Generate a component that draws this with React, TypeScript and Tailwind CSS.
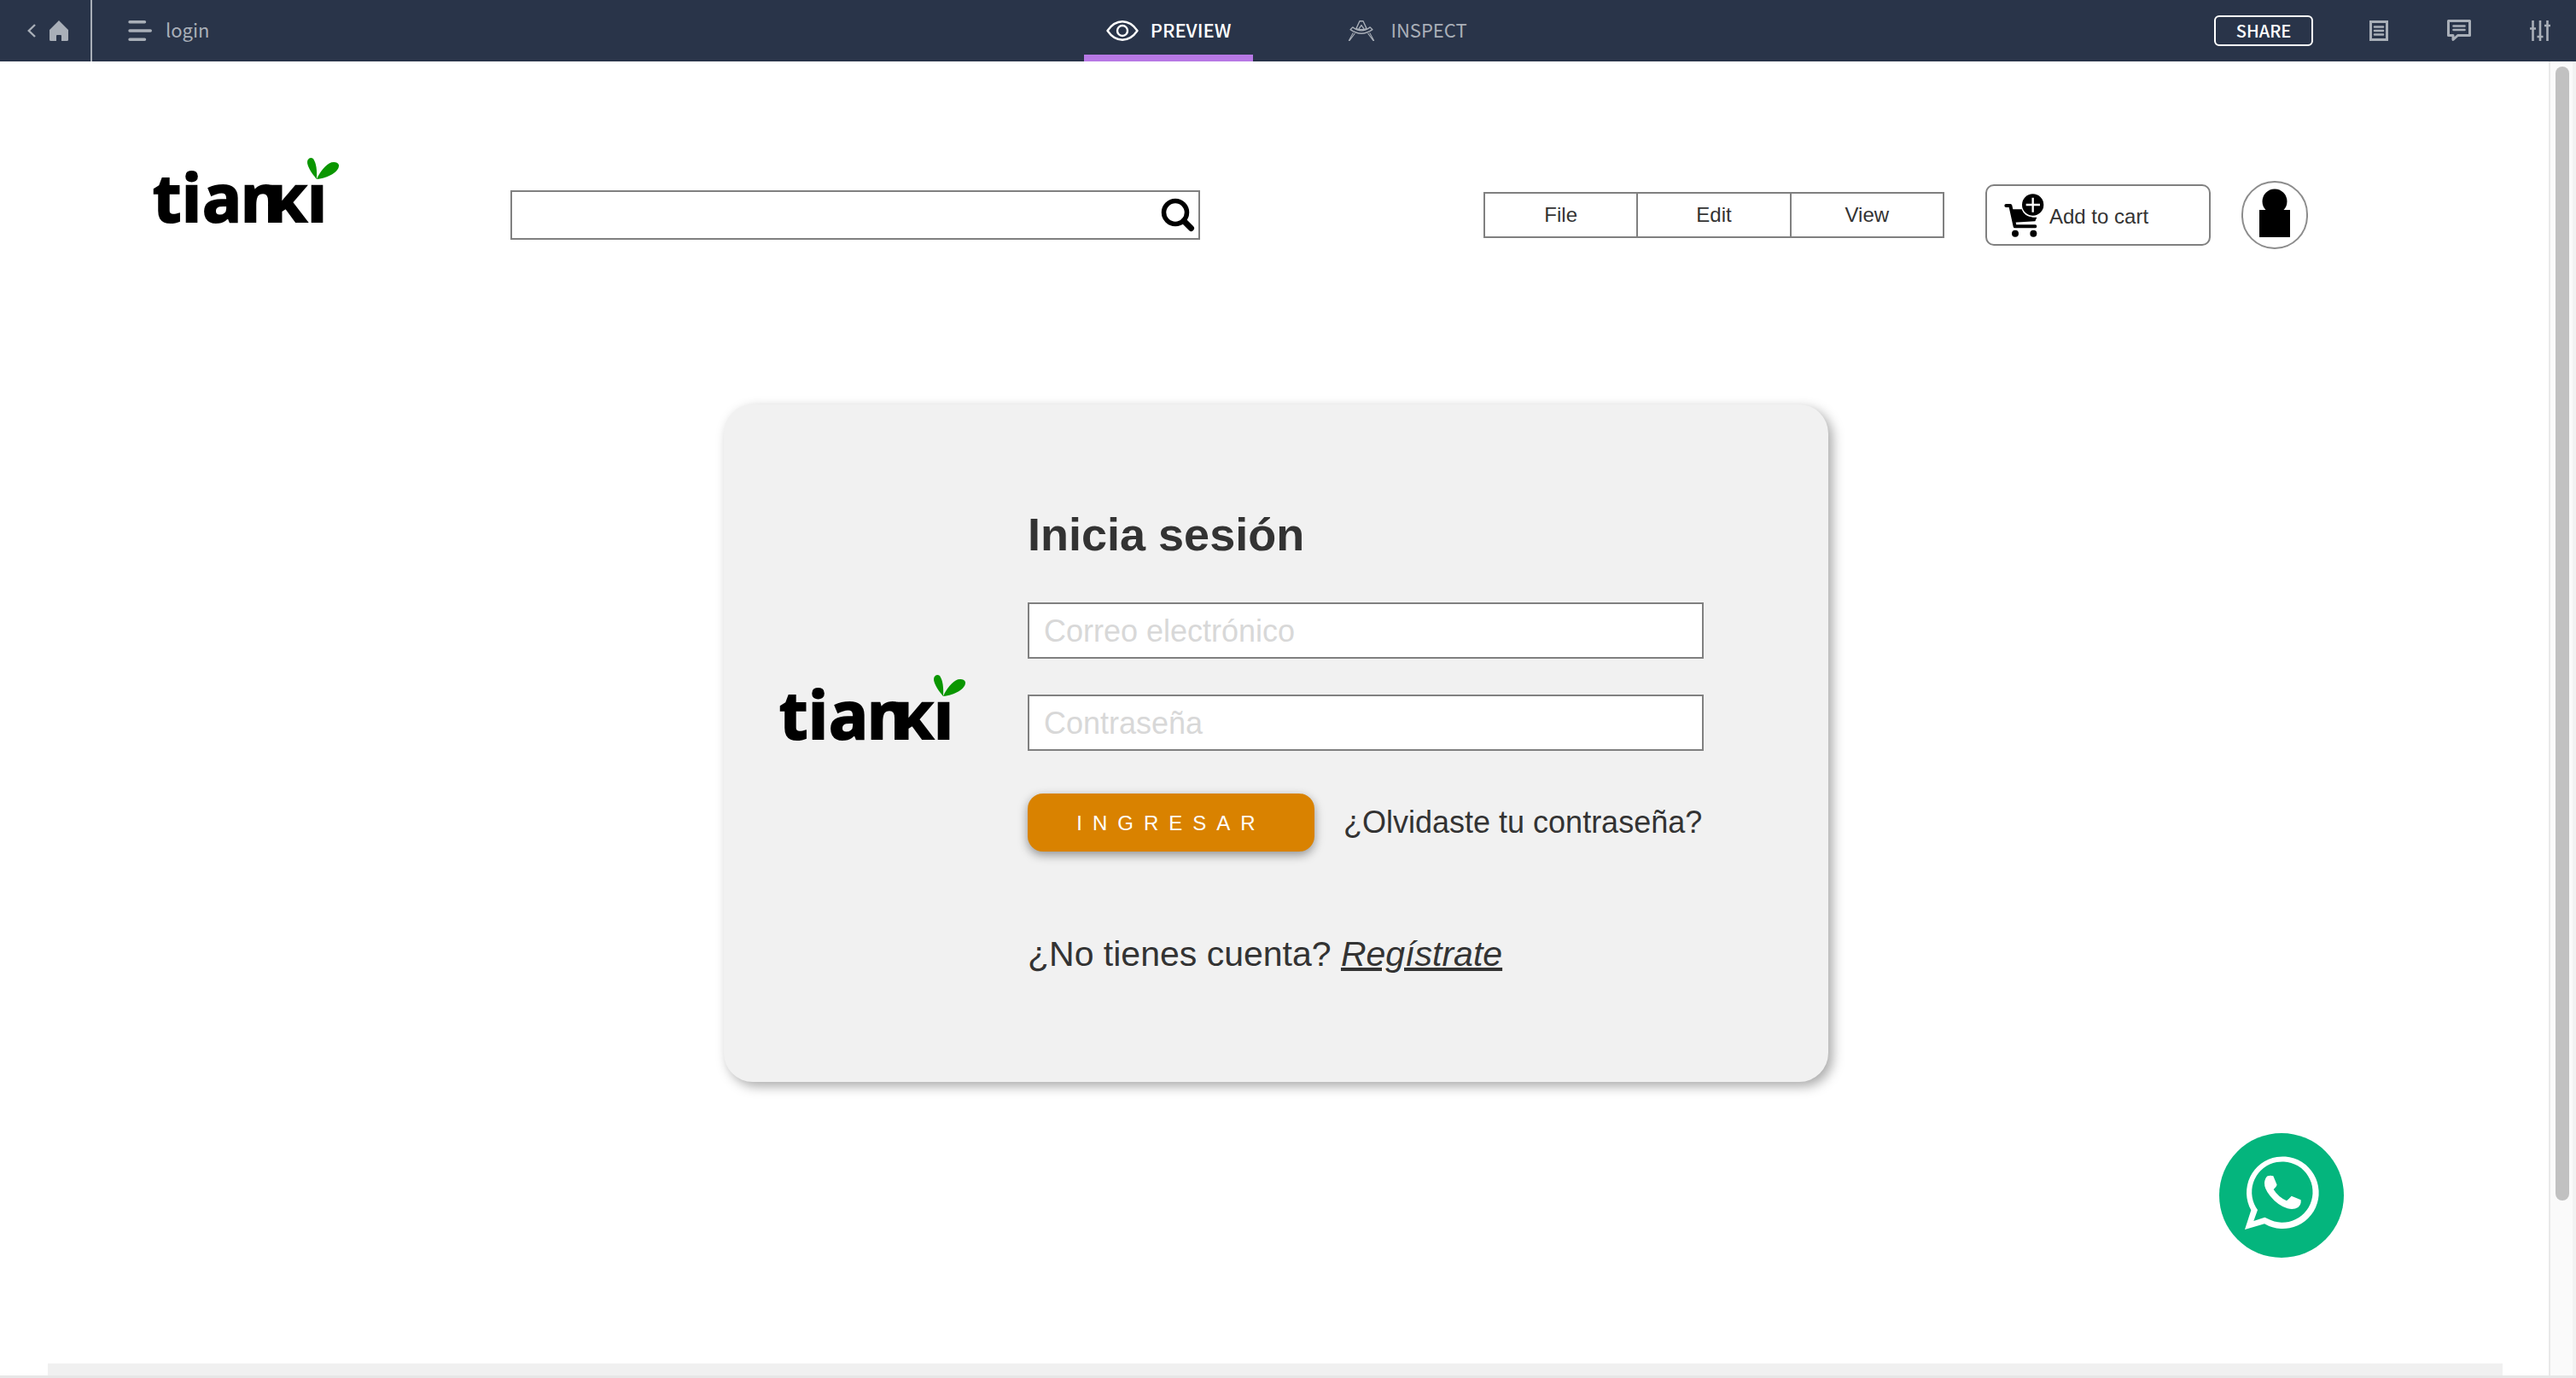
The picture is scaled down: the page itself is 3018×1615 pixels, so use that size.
import type { ReactNode } from "react";

function TiankiLogo({ className = "" }: { className?: string }) {
  return (
    <svg
      viewBox="0 0 222 80"
      role="img"
      aria-label="tianki"
      className={`h-20 w-[222px] shrink-0 overflow-visible ${className}`}
    >
      <g
        fontFamily="'Noto Sans', 'Open Sans', sans-serif"
        fontWeight={700}
        fontSize={77}
        fill="#000"
        stroke="#000"
        strokeWidth={2}
      >
        <text x="1 35 59 104" y="76">
          tian
        </text>
        <text x="134" y="76">
          ĸ
        </text>
        <text x="182" y="76">
          ı
        </text>
      </g>
      <g fill="#0a9600" transform="translate(-28 -24) scale(0.3333)">
        <path d="M663 150C642 126 624 96 632 82Q640 70 651 78C662 94 665 120 663 150Z" />
        <path d="M663 150C674 126 694 98 715 91Q735 87 741 100C744 124 702 147 663 150Z" />
      </g>
    </svg>
  );
}

function HomeIcon() {
  return (
    <svg viewBox="0 0 22 24" className="h-6 w-[22px]" fill="currentColor" aria-hidden="true">
      <path d="M11 0 22 11V22.500Q22 24 20.500 24H14V18Q14 17 13 17H9Q8 17 8 18V24H1.500Q0 24 0 22.500V11Z" />
    </svg>
  );
}

function MenuIcon() {
  return (
    <svg
      viewBox="0 0 28 24"
      className="h-6 w-7"
      fill="none"
      stroke="currentColor"
      strokeWidth="3.400"
      strokeLinecap="round"
      aria-hidden="true"
    >
      <path d="M2 1.800H19.500M2 12H26.300M2 22.200H19.500" />
    </svg>
  );
}

function EyeIcon() {
  return (
    <svg
      viewBox="0 0 38 24"
      className="h-6 w-[38px]"
      fill="none"
      stroke="currentColor"
      strokeWidth="2.400"
      strokeLinejoin="round"
      aria-hidden="true"
    >
      <path d="M1.500 12C6 5.500 12 1.300 19 1.300S32 5.500 36.500 12C32 18.500 26 22.700 19 22.700S6 18.500 1.500 12Z" />
      <circle cx="19" cy="12" r="6" />
    </svg>
  );
}

function InspectIcon() {
  return (
    <svg
      viewBox="1018 73 94 76"
      className="h-[26px] w-8"
      fill="none"
      stroke="currentColor"
      strokeWidth="4"
      strokeLinejoin="round"
      strokeLinecap="round"
      aria-hidden="true"
    >
      <path d="M1059 78H1071L1083 104Q1065 110 1047 104Z" />
      <path d="M1057 103 1065 92 1073 103" />
      <path d="M1035 99 1027 107Q1065 134 1103 107L1095 99Q1065 122 1035 99Z" />
      <path d="M1036 119 1022 145M1042 121 1024 145M1094 119 1108 145M1088 121 1106 145" strokeWidth="3" />
    </svg>
  );
}

function NotesIcon() {
  return (
    <svg viewBox="0 0 22 24" className="h-6 w-[22px]" fill="none" stroke="currentColor" aria-hidden="true">
      <rect x="1.500" y="1.500" width="19" height="21" strokeWidth="3" />
      <path d="M6 7.500H16M6 12H16M6 16.500H16" strokeWidth="2.600" strokeLinecap="round" />
    </svg>
  );
}

function CommentIcon() {
  return (
    <svg viewBox="0 0 28 26" className="h-[26px] w-7" fill="none" stroke="currentColor" aria-hidden="true">
      <path d="M1.500 1.500H26.500V18.500H12.500L7 23.500V18.500H1.500Z" strokeWidth="3" strokeLinejoin="round" />
      <path d="M7.500 7.500H20.500M7.500 12H20.500" strokeWidth="2.600" strokeLinecap="round" />
    </svg>
  );
}

function SlidersIcon() {
  return (
    <svg viewBox="0 0 24 24" className="size-6" fill="none" stroke="currentColor" aria-hidden="true">
      <path d="M3.500 0V24M12 0V24M20.500 0V24" strokeWidth="2.600" />
      <path d="M0 9.500H7M8.500 19H15.500M17 6H24" strokeWidth="2.600" />
    </svg>
  );
}

function SearchIcon() {
  return (
    <svg viewBox="0 0 40 40" className="size-10" fill="none" stroke="#000" strokeLinecap="round" aria-hidden="true">
      <circle cx="17" cy="17" r="13.500" strokeWidth="5.500" />
      <path d="M27 27 35.500 35.500" strokeWidth="7" />
    </svg>
  );
}

function CartIcon() {
  return (
    <svg viewBox="323 113 141 153" className="h-[51px] w-[47px]" aria-hidden="true">
      <path
        d="M330 155H345L361 228H432"
        fill="none"
        stroke="#000"
        strokeWidth="12"
        strokeLinecap="round"
        strokeLinejoin="round"
      />
      <path d="M346 168H386Q392 192 424 196H438L432 210L357 214Z" />
      <circle cx="362" cy="253" r="12" />
      <circle cx="426" cy="253" r="12" />
      <circle cx="424" cy="152" r="40" stroke="#fff" strokeWidth="4" />
      <path d="M400 152H449M424 127V178" stroke="#fff" strokeWidth="7" />
    </svg>
  );
}

function WhatsAppIcon() {
  return (
    <svg viewBox="90 83 438 438" className="size-[146px]" aria-hidden="true">
      <circle cx="309" cy="302" r="219" fill="#04b57d" />
      <g fill="#fff">
        <path
          fillRule="evenodd"
          d="M180 422 202 354A127 127 0 1 1 249 402ZM211 392 225 353 219 344A107 107 0 1 1 260 384L250 379Z"
        />
        <path d="M260 234Q270 230 280 234L293 265Q290 273 281 281Q298 308 327 321Q335 314 344 304Q362 311 377 318Q379 335 367 344Q352 354 330 348Q296 338 268 303Q248 278 249 258Q251 240 260 234Z" />
      </g>
    </svg>
  );
}

function TopBar() {
  return (
    <nav className="grid h-[72px] shrink-0 grid-cols-[1fr_auto_1fr] bg-[#293449] font-['Noto_Sans_CJK_SC','Noto_Sans',sans-serif] text-[22px] leading-8 text-[#a9afb8]">
      <div className="flex items-center">
        <a href="#home" aria-label="Home" className="flex h-full items-center gap-4 border-r-2 border-[#a9afb8] pr-[26px] pl-8">
          <svg viewBox="0 0 10 16" className="h-4 w-2.5" fill="none" stroke="currentColor" strokeWidth="2.400" aria-hidden="true">
            <path d="M9 1 1.800 8 9 15" />
          </svg>
          <HomeIcon />
        </a>
        <button type="button" className="ml-[42px] flex items-center gap-4">
          <MenuIcon />
          <span className="pb-1">login</span>
        </button>
      </div>
      <div className="flex">
        <button
          type="button"
          className="flex w-[198px] items-center justify-center gap-3.5 border-y-8 border-t-transparent border-b-[#b778e5] font-medium text-white"
        >
          <EyeIcon />
          <span className="pb-1">PREVIEW</span>
        </button>
        <button type="button" className="ml-[82px] flex w-[198px] items-center justify-center gap-[18px]">
          <InspectIcon />
          <span className="pb-1">INSPECT</span>
        </button>
      </div>
      <div className="flex items-center justify-end pr-[30px]">
        <button
          type="button"
          className="mr-[66px] h-9 w-[116px] rounded-md border-2 border-white text-xl leading-8 font-medium text-white"
        >
          SHARE
        </button>
        <div className="flex items-center gap-[69px]">
          <button type="button" aria-label="Notes">
            <NotesIcon />
          </button>
          <button type="button" aria-label="Comments">
            <CommentIcon />
          </button>
          <button type="button" aria-label="Settings">
            <SlidersIcon />
          </button>
        </div>
      </div>
    </nav>
  );
}

function MenuItem({ children }: { children: ReactNode }) {
  return (
    <button type="button" className="flex-1 border-r-2 border-[#808080] last:border-r-0">
      {children}
    </button>
  );
}

function SiteHeader() {
  return (
    <header className="flex items-center pt-28 pr-[282px] pl-[178px] text-2xl leading-8">
      <TiankiLogo className="mb-14" />
      <label className="ml-[198px] flex h-[58px] min-w-0 flex-1 items-center border-2 border-[#808080] pr-1">
        <input type="search" aria-label="Buscar" className="h-full min-w-0 flex-1 px-4 outline-none" />
        <SearchIcon />
      </label>
      <div className="ml-[332px] flex h-[54px] w-[540px] border-2 border-[#808080]">
        <MenuItem>File</MenuItem>
        <MenuItem>Edit</MenuItem>
        <MenuItem>View</MenuItem>
      </div>
      <button
        type="button"
        className="ml-12 flex h-[72px] w-[264px] items-center gap-1.5 rounded-[10px] border-2 border-[#808080] pl-5"
      >
        <CartIcon />
        <span className="pt-1">Add to cart</span>
      </button>
      <button
        type="button"
        aria-label="Account"
        className="ml-9 flex h-20 w-[78px] items-center justify-center rounded-full border-2 border-[#8c8c8c] pb-1"
      >
        <svg viewBox="0 0 36 58" className="h-[58px] w-9" aria-hidden="true">
          <circle cx="18" cy="15" r="14.500" />
          <rect y="25" width="36" height="32" />
        </svg>
      </button>
    </header>
  );
}

function Field({ id, type, label }: { id: string; type: string; label: string }) {
  return (
    <input
      id={id}
      type={type}
      aria-label={label}
      placeholder={label}
      className="h-[66px] w-full border-2 border-[#808080] bg-white px-[17px] pt-0.5 text-4xl leading-10 outline-none placeholder:text-[#d8d8d8]"
    />
  );
}

function LoginCard() {
  return (
    <section className="mx-auto mt-[154px] flex w-[1294px] items-start rounded-[34px] bg-[#f1f1f1] pt-[122px] pr-[146px] pb-[126px] pl-16 shadow-[5px_5px_14px_rgba(0,0,0,0.34)]">
      <TiankiLogo className="mt-[194px]" />
      <form className="ml-[70px] flex flex-1 flex-col" onSubmit={(event) => event.preventDefault()}>
        <h1 className="text-[54px] leading-[60px] font-bold">Inicia sesión</h1>
        <div className="mt-[50px] flex flex-col gap-[42px]">
          <Field id="email" type="email" label="Correo electrónico" />
          <Field id="password" type="password" label="Contraseña" />
        </div>
        <div className="mt-[50px] flex items-center">
          <button
            type="submit"
            className="h-[68px] w-[336px] rounded-[18px] bg-[#d98200] pt-0.5 text-2xl leading-8 tracking-[12px] text-white shadow-[0_4px_12px_rgba(0,0,0,0.4)]"
          >
            INGRESAR
          </button>
          <a href="#recuperar" className="ml-[34px] text-4xl leading-10 whitespace-nowrap">
            ¿Olvidaste tu contraseña?
          </a>
        </div>
        <p className="mt-24 text-[41px] leading-[48px]">
          ¿No tienes cuenta?{" "}
          <a href="#registro" className="italic underline decoration-4">
            Regístrate
          </a>
        </p>
      </form>
    </section>
  );
}

export default function App() {
  return (
    <div className="flex min-h-screen flex-col bg-white font-['Liberation_Sans',Arial,sans-serif] text-[#333]">
      <TopBar />
      <div className="flex flex-1 border-b-[3px] border-[#e7e7e7]">
        <div className="relative flex min-w-0 flex-1 flex-col">
          <SiteHeader />
          <main className="flex-1 pl-1">
            <LoginCard />
          </main>
          <footer className="mr-[54px] ml-14 h-3.5 bg-[#f0f0f0]" />
          <a href="#whatsapp" aria-label="WhatsApp" className="absolute right-60 bottom-[138px] rounded-full">
            <WhatsAppIcon />
          </a>
        </div>
        <div className="w-8 border-r-4 border-l-2 border-r-[#f2f2f2] border-l-[#e9e9e9] bg-[#fafafa] pt-1.5 pl-1.5">
          <div className="h-13/15 w-4 rounded-full bg-[#c1c1c1]" />
        </div>
      </div>
    </div>
  );
}
